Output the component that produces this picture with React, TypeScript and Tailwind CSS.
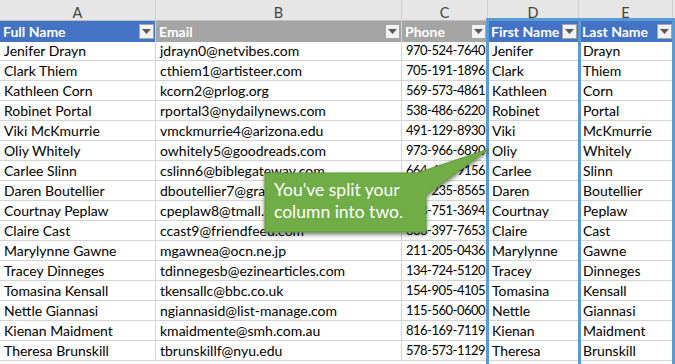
const rows: [string, string, string][] = [
  ['Jenifer Drayn', 'jdrayn0@netvibes.com', '970-524-7640'],
  ['Clark Thiem', 'cthiem1@artisteer.com', '705-191-1896'],
  ['Kathleen Corn', 'kcorn2@prlog.org', '569-573-4861'],
  ['Robinet Portal', 'rportal3@nydailynews.com', '538-486-6220'],
  ['Viki McKmurrie', 'vmckmurrie4@arizona.edu', '491-129-8930'],
  ['Oliy Whitely', 'owhitely5@goodreads.com', '973-966-6890'],
  ['Carlee Slinn', 'cslinn6@biblegateway.com', '664-462-9156'],
  ['Daren Boutellier', 'dboutellier7@gravatar.com', '621-235-8565'],
  ['Courtnay Peplaw', 'cpeplaw8@tmall.com', '318-751-3694'],
  ['Claire Cast', 'ccast9@friendfeed.com', '836-397-7653'],
  ['Marylynne Gawne', 'mgawnea@ocn.ne.jp', '211-205-0436'],
  ['Tracey Dinneges', 'tdinnegesb@ezinearticles.com', '134-724-5120'],
  ['Tomasina Kensall', 'tkensallc@bbc.co.uk', '154-905-4105'],
  ['Nettle Giannasi', 'ngiannasid@list-manage.com', '115-560-0600'],
  ['Kienan Maidment', 'kmaidmente@smh.com.au', '816-169-7119'],
  ['Theresa Brunskill', 'tbrunskillf@nyu.edu', '578-573-1129'],
];

const cols = 'grid grid-cols-[156px_246px_86px_91px_94px]';

function Dropdown() {
  return (
    <span className="ml-auto flex h-[15px] w-[15px] shrink-0 items-center justify-center border border-[#a6a6a6] bg-[#f2f2f2]">
      <svg width="9" height="5" viewBox="0 0 9 5">
        <path d="M0 0h9L4.5 5z" fill="#595959" />
      </svg>
    </span>
  );
}

function HeadCell({ label, blue, last }: { label: string; blue?: boolean; last?: boolean }) {
  return (
    <div
      className={`flex items-center pl-[3px] pr-[1px] font-bold text-white ${
        blue ? 'bg-[#4472c4]' : 'bg-[#a5a5a5]'
      } ${last ? '' : 'border-r border-[#d4d4d4]'}`}
    >
      <span className="whitespace-nowrap">{label}</span>
      <Dropdown />
    </div>
  );
}

function Cell({ text, last, narrow }: { text: string; last?: boolean; narrow?: boolean }) {
  return (
    <div
      className={`overflow-hidden whitespace-nowrap pl-[4px] leading-[19px] ${
        narrow ? 'pl-[3px] text-[13px] tracking-[-0.5px]' : ''
      } ${last ? '' : 'border-r border-[#d4d4d4]'}`}
    >
      {text}
    </div>
  );
}

export default function App() {
  return (
    <div className="relative h-[364px] w-[675px] overflow-hidden bg-white font-['Lato','Liberation_Sans',sans-serif] text-[14px] text-black">
      {/* column letters */}
      <div className={`${cols} h-[21px] border-b border-[#bfbfbf] bg-[#e6e6e6] text-[14.5px] text-[#444]`}>
        {['A', 'B', 'C', 'D', 'E'].map((l) => (
          <div key={l} className="flex items-center justify-center border-r border-[#cfcfcf] pt-[2px]">
            {l}
          </div>
        ))}
      </div>

      {/* table header */}
      <div className={`${cols} h-[20px] border-b border-[#d4d4d4]`}>
        <HeadCell label="Full Name" blue />
        <HeadCell label="Email" />
        <HeadCell label="Phone" />
        <HeadCell label="First Name" blue />
        <HeadCell label="Last Name" blue last />
      </div>

      {rows.map(([full, email, phone]) => {
        const [first, last] = full.split(' ');
        return (
          <div key={email} className={`${cols} h-[20px] border-b border-[#d4d4d4]`}>
            <Cell text={full} />
            <Cell text={email} />
            <Cell text={phone} narrow />
            <Cell text={first} />
            <Cell text={last} last />
          </div>
        );
      })}

      {/* selection boxes */}
      <div className="absolute left-[486px] top-[18px] h-[350px] w-[95px] border-[3px] border-[#5b9bd5]" />
      <div className="absolute left-[578px] top-[18px] h-[350px] w-[97px] border-[3px] border-[#5b9bd5]" />

      {/* callout */}
      <svg className="absolute left-0 top-0" width="675" height="364">
        <defs>
          <filter id="sh" x="-20%" y="-20%" width="140%" height="160%">
            <feDropShadow dx="0" dy="2" stdDeviation="2" floodColor="#000" floodOpacity="0.55" />
          </filter>
        </defs>
        <polygon
          points="265,173 417,173 489,149 426,195 426,232 265,232"
          fill="#70ad47"
          stroke="#5f9a3a"
          strokeWidth="1"
          filter="url(#sh)"
        />
      </svg>
      <div className="absolute left-[274px] top-[179px] text-[17.5px] leading-[22px] text-white">
        You've split your
        <br />
        column into two.
      </div>
    </div>
  );
}
